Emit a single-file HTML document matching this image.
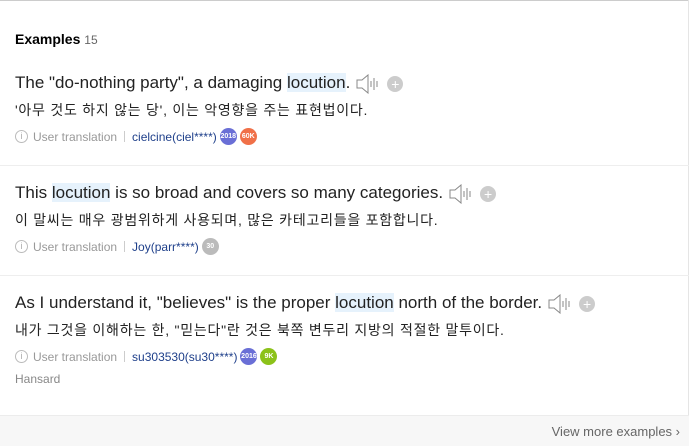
<!DOCTYPE html><html><head><meta charset="utf-8"><style>
body{margin:0;width:689px;height:445px;overflow:hidden;background:#fff;font-family:"Liberation Sans","Noto Sans CJK KR",sans-serif;position:relative}
.top{position:absolute;left:0;top:0;width:689px;height:1px;background:#ccc}
.rb{position:absolute;right:0;top:0;width:1px;height:445px;background:#e5e5e5}
h3{position:absolute;left:15px;top:31px;margin:0;font-size:14px;font-weight:bold;color:#000}
h3 span{font-weight:normal;font-size:12px;color:#666}
.ex{position:absolute;left:15px;width:670px}
.en{font-size:17px;color:#222;height:20px;line-height:20px;white-space:nowrap}
.en b{font-weight:normal;background:#e6f2fc}
.ko{font-size:14px;letter-spacing:0.75px;color:#222;margin-top:9px;line-height:16px;white-space:nowrap}
.meta{font-size:12px;color:#999;margin-top:10px;line-height:16px;display:flex;align-items:center}
.i{display:inline-block;width:11px;height:11px;border:1px solid #bbb;border-radius:50%;font-size:9px;line-height:11px;text-align:center;color:#aaa;margin-right:5px}
.sep{display:inline-block;width:1px;height:11px;background:#ccc;margin:0 7px}
.u{color:#1e3f8a}
.bd{display:inline-block;width:17px;height:17px;border-radius:50%;font-size:7px;color:#fff;text-align:center;line-height:17px;margin-left:3px;font-weight:bold}
.sp{display:inline-block;vertical-align:middle;margin-left:6px}
.plus{display:inline-block;width:16px;height:16px;border-radius:50%;background:#ccc;color:#fff;text-align:center;line-height:16px;font-size:14px;vertical-align:middle;margin-left:8px}
.hr{position:absolute;left:0;width:689px;height:1px;background:#eee}
.foot{position:absolute;left:0;top:415px;width:689px;height:30px;background:#f7f7f7;border-top:1px solid #ececec}
.foot span{position:absolute;right:9px;top:8px;font-size:13px;color:#666}
</style></head><body>
<div class="top"></div><div class="rb"></div>
<h3>Examples <span>15</span></h3>
<svg width="0" height="0" style="position:absolute"><defs><g id="spk"><path d="M1 6h5l6-5v18l-6-5H1z" fill="none" stroke="#888" stroke-width="1"/><path d="M15 7v6M18 4v12M21 7v6" stroke="#888" stroke-width="1"/></g></defs></svg>
<div class="ex" style="top:73px">
<div class="en">The "do-nothing party", a damaging <b>locution</b>.<svg class="sp" width="23" height="20"><use href="#spk"/></svg><span class="plus">+</span></div>
<div class="ko">'아무 것도 하지 않는 당', 이는 악영향을 주는 표현법이다.</div>
<div class="meta"><span class="i">i</span>User translation<span class="sep"></span><span class="u">cielcine(ciel****)</span><span class="bd" style="background:#6a6fd6">2018</span><span class="bd" style="background:#f07048">60K</span></div>
</div>
<div class="hr" style="top:165px"></div>
<div class="ex" style="top:183px">
<div class="en">This <b>locution</b> is so broad and covers so many categories.<svg class="sp" width="23" height="20"><use href="#spk"/></svg><span class="plus">+</span></div>
<div class="ko">이 말씨는 매우 광범위하게 사용되며, 많은 카테고리들을 포함합니다.</div>
<div class="meta"><span class="i">i</span>User translation<span class="sep"></span><span class="u">Joy(parr****)</span><span class="bd" style="background:#bbb">30</span></div>
</div>
<div class="hr" style="top:275px"></div>
<div class="ex" style="top:293px">
<div class="en">As I understand it, "believes" is the proper <b>locution</b> north of the border.<svg class="sp" width="23" height="20"><use href="#spk"/></svg><span class="plus">+</span></div>
<div class="ko">내가 그것을 이해하는 한, "믿는다"란 것은 북쪽 변두리 지방의 적절한 말투이다.</div>
<div class="meta"><span class="i">i</span>User translation<span class="sep"></span><span class="u">su303530(su30****)</span><span class="bd" style="background:#6a6fd6">2016</span><span class="bd" style="background:#8cc21a">9K</span></div>
<div style="font-size:12px;color:#888;margin-top:7px">Hansard</div>
</div>
<div class="foot"><span>View more examples ›</span></div>
</body></html>
